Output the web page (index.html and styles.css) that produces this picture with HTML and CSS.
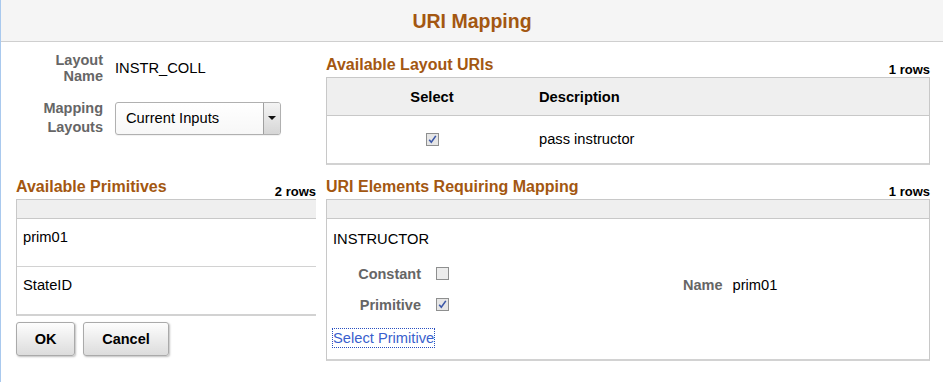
FILE: index.html
```html
<!DOCTYPE html>
<html>
<head>
<meta charset="utf-8">
<link rel="stylesheet" href="styles.css">
</head>
<body>
<div class="page">
  <header class="hdr"><h1 class="hdr-title">URI Mapping</h1></header>
  <main class="main">
    <section class="form">
      <div class="frow frow-1">
        <div class="flabel">Layout<br>Name</div>
        <div class="fvalue">INSTR_COLL</div>
      </div>
      <div class="frow frow-2">
        <div class="flabel flabel-2">Mapping<br>Layouts</div>
        <div class="select">
          <span class="select-text">Current Inputs</span>
          <span class="select-btn"><span class="tri"></span></span>
        </div>
      </div>
    </section>

    <section class="gsec">
      <div class="gbar">
        <h2 class="gtitle">Available Layout URIs</h2>
        <span class="grows">1 rows</span>
      </div>
      <div class="gtable gtable-uri">
        <div class="ghead ghead-tall">
          <span class="col-select">Select</span>
          <span class="col-desc">Description</span>
        </div>
        <div class="grow-uri">
          <span class="col-select">
            <svg class="cb" width="13" height="13" viewBox="0 0 13 13"><rect x="0.5" y="0.5" width="12" height="12" fill="#e6e6e6" stroke="#8e8f8f"/><path d="M3.2 6.8 L5.3 9.3 L9.8 2.9" fill="none" stroke="#3b57a8" stroke-width="1.6"/></svg>
          </span>
          <span class="col-desc plain">pass instructor</span>
        </div>
      </div>
    </section>

    <section class="gsec gsec-low">
      <div class="gbar">
        <h2 class="gtitle">Available Primitives</h2>
        <span class="grows">2 rows</span>
      </div>
      <div class="gtable gtable-prim">
        <div class="ghead"></div>
        <div class="prow">prim01</div>
        <div class="prow prow-last">StateID</div>
      </div>
      <div class="btns">
        <button class="btn btn-ok">OK</button>
        <button class="btn btn-cancel">Cancel</button>
      </div>
    </section>

    <section class="gsec gsec-low">
      <div class="gbar">
        <h2 class="gtitle">URI Elements Requiring Mapping</h2>
        <span class="grows">1 rows</span>
      </div>
      <div class="gtable gtable-elem">
        <div class="ghead"></div>
        <div class="ebody">
          <div class="ename">INSTRUCTOR</div>
          <div class="eline">
            <div class="opts">
              <span class="olabel">Constant</span>
              <svg class="cb" width="13" height="13" viewBox="0 0 13 13"><rect x="0.5" y="0.5" width="12" height="12" fill="#ececec" stroke="#8e8f8f"/></svg>
              <span class="olabel">Primitive</span>
              <svg class="cb" width="13" height="13" viewBox="0 0 13 13"><rect x="0.5" y="0.5" width="12" height="12" fill="#e6e6e6" stroke="#8e8f8f"/><path d="M3.2 6.8 L5.3 9.3 L9.8 2.9" fill="none" stroke="#3b57a8" stroke-width="1.6"/></svg>
            </div>
            <div class="namepair">
              <span class="olabel">Name</span>
              <span class="nval">prim01</span>
            </div>
          </div>
          <a class="elink" href="#">Select Primitive</a>
        </div>
      </div>
    </section>
  </main>
</div>
</body>
</html>
```

FILE: styles.css
```css
* { box-sizing: border-box; }
html, body { margin: 0; padding: 0; background: #fff; }
body {
  font-family: "Liberation Sans", Arial, sans-serif;
  font-size: 14.7px;
  color: #000;
}
.page {
  width: 943px;
  height: 382px;
  border-left: 1px solid #a9c9ee;
  overflow: hidden;
}
.hdr {
  height: 42px;
  background: #f5f5f5;
  border-bottom: 1px solid #cfcfcf;
  display: flex;
  align-items: center;
  justify-content: center;
}
.hdr-title {
  margin: 0;
  font-size: 19.5px;
  font-weight: bold;
  color: #a35711;
  padding-top: 1px;
}
.main {
  display: grid;
  grid-template-columns: 300px 604px;
  column-gap: 10px;
  row-gap: 13px;
  padding: 10px 0 0 15px;
}
/* form */
.form { display: flex; flex-direction: column; }
.frow { display: flex; align-items: center; gap: 12px; }
.flabel {
  width: 87px;
  text-align: right;
  font-weight: bold;
  font-size: 14.5px;
  color: #666;
  line-height: 16px;
}
.flabel-2 { line-height: 19px; }
.frow-2 { margin-top: 15px; }
.fvalue { line-height: 16px; }
.select {
  width: 166px;
  height: 33px;
  border: 1px solid #b0b0b0;
  border-radius: 3px;
  background: linear-gradient(#fff, #f7f7f7);
  display: flex;
  align-items: center;
  justify-content: space-between;
  padding-left: 10px;
  box-shadow: 0 1px 1px rgba(0,0,0,0.06);
}
.select-text { line-height: 16px; }
.select-btn {
  width: 17px;
  height: 31px;
  border-left: 1px solid #a0a0a0;
  background: linear-gradient(#f4f4f4, #d6d6d6);
  border-radius: 0 2px 2px 0;
  display: flex;
  align-items: center;
  justify-content: center;
}
.tri {
  width: 0; height: 0;
  border-left: 4px solid transparent;
  border-right: 4px solid transparent;
  border-top: 4px solid #111;
}
/* grids */
.gsec { display: flex; flex-direction: column; padding-top: 4px; }
.gsec-low { padding-top: 0; }
.gbar {
  height: 21px;
  display: flex;
  justify-content: space-between;
  align-items: flex-end;
}
.gtitle {
  margin: 0;
  font-size: 16px;
  font-weight: bold;
  color: #a35711;
  line-height: 18px;
  padding-bottom: 3px;
}
.grows {
  font-size: 13px;
  font-weight: bold;
  line-height: 14px;
}
.gtable {
  border: 1px solid #c8c8c8;
  border-bottom-width: 2px;
  border-bottom-color: #d2d2d2;
}
.ghead {
  height: 19px;
  background: #efefef;
  border-bottom: 1px solid #c8c8c8;
}
.ghead-tall {
  height: 38px;
  display: flex;
  align-items: center;
  font-weight: bold;
}
.col-select { width: 210px; text-align: center; display: inline-flex; justify-content: center; }
.col-desc { flex: 1; padding-left: 2px; }
.grow-uri { height: 47px; display: flex; align-items: center; padding-bottom: 1px; }
.plain { font-weight: normal; }
.cb { display: block; }
.gtable-prim { border-right: none; }
.prow {
  height: 48px;
  border-bottom: 1px solid #d2d2d2;
  padding: 10px 0 0 6px;
  line-height: 16px;
}
.prow-last { border-bottom: none; height: 47px; }
.btns { display: flex; gap: 8px; margin-top: 6px; }
.btn {
  font-family: "Liberation Sans", Arial, sans-serif;
  font-size: 14.5px;
  font-weight: bold;
  height: 34px;
  border: 1px solid #aaa;
  border-radius: 3px;
  background: linear-gradient(#fdfdfd, #dcdcdc);
  box-shadow: 1px 1px 2px rgba(0,0,0,0.25);
  color: #000;
  padding: 0;
}
.btn-ok { width: 59px; }
.btn-cancel { width: 86px; }
.gtable-elem { height: 162px; }
.ebody { padding: 12px 0 0 6px; }
.ename { line-height: 16px; }
.eline { display: flex; margin-top: 11px; }
.opts {
  width: 350px;
  display: grid;
  grid-template-columns: 88px 13px;
  grid-auto-rows: 31px;
  column-gap: 15px;
  align-items: center;
}
.olabel { font-weight: bold; font-size: 14.5px; color: #666; text-align: right; line-height: 16px; }
.namepair { display: flex; align-items: center; gap: 10px; padding-bottom: 8px; }
.nval { line-height: 16px; }
.elink {
  display: inline-block;
  margin-top: 9px;
  color: #3a5fcd;
  text-decoration: none;
  line-height: 18px;
  outline: 1px dotted #2a4fc0;
}
```
